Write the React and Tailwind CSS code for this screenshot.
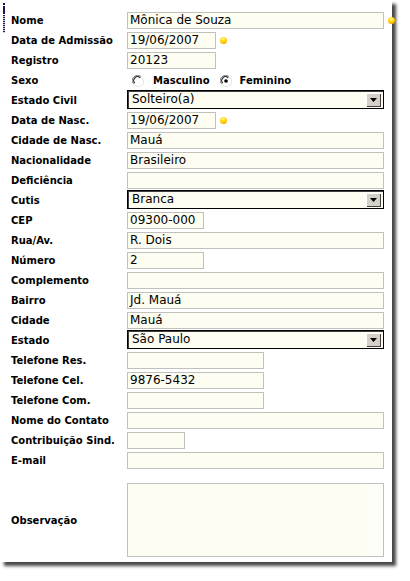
import React from "react";

const labelFont = { fontFamily: '"DejaVu Sans", Verdana, sans-serif' };

function Dot() {
  return (
    <span className="ml-[4px] mt-[5px] inline-block h-[7px] w-[7px] shrink-0 rounded-full bg-[radial-gradient(circle_at_45%_30%,#fff7a0,#ffd400_45%,#f5a300_85%)]" />
  );
}

function Field({ w, value = "" }) {
  return (
    <div
      className={`${w} h-[17px] shrink-0 border border-[#c0c0bc] bg-[#fdfdf1] pl-[2px] text-[12px] leading-[15px] text-black whitespace-nowrap overflow-hidden`}
    >
      {value}
    </div>
  );
}

function Select({ value }) {
  return (
    <div className="-mt-[2px] flex h-[19px] w-[257px] shrink-0 items-center border border-black bg-[#fdfdf1] shadow-[inset_1px_1px_0_#404040] pl-[4px] pr-[2px] text-[12px] leading-[15px]">
      <span className="flex-1">{value}</span>
      <span className="flex h-[14px] w-[15px] items-center justify-center bg-[#d4d0c8] shadow-[inset_1px_1px_0_#ffffff,inset_-1px_-1px_0_#404040]">
        <svg width="7" height="4" viewBox="0 0 7 4">
          <path d="M0 0h7L3.5 4z" fill="#000" />
        </svg>
      </span>
    </div>
  );
}

function Radio({ checked }) {
  return (
    <svg width="12" height="12" viewBox="0 0 12 12" className="shrink-0">
      <circle cx="6" cy="6" r="5" fill="#fff" />
      <path d="M1.8 9.2A5 5 0 0 1 9.2 1.8" stroke="#808080" strokeWidth="1" fill="none" />
      <path d="M2.8 8.2A3.6 3.6 0 0 1 8.2 2.8" stroke="#202020" strokeWidth="1.2" fill="none" />
      <path d="M10.2 2.8A5 5 0 0 1 2.8 10.2" stroke="#e0e0e0" strokeWidth="1" fill="none" />
      {checked && <circle cx="6" cy="6" r="1.8" fill="#000" />}
    </svg>
  );
}

function Row({ label, children }) {
  return (
    <div className="flex h-[20px] shrink-0 items-start">
      <div
        className="flex h-[17px] w-[127px] shrink-0 items-center pl-[11px] text-[10px] font-bold text-black"
        style={labelFont}
      >
        {label}
      </div>
      {children}
    </div>
  );
}

const W = "w-[257px]";

export default function App() {
  return (
    <div className="min-h-[581px] bg-white" style={labelFont}>
      <div className="relative h-[562px] w-[392px] bg-white shadow-[4px_4px_3px_rgba(40,40,40,0.85)]">
        <svg className="absolute left-[2px] top-[2px]" width="4" height="32" viewBox="0 0 4 32">
          <rect x="1" y="1" width="2" height="2" fill="#14145a" />
          <rect x="1" y="4" width="2" height="8" fill="#14145a" />
          {[13, 15, 17, 19, 21, 23, 25, 27, 29].map((y) => (
            <rect key={y} x="1" y={y} width="2" height="1.2" fill="#14145a" />
          ))}
        </svg>

        <div className="flex flex-col pt-[12px]">
          <Row label="Nome">
            <Field w={W} value="Mônica de Souza" />
            <Dot />
          </Row>
          <Row label="Data de Admissão">
            <Field w="w-[89px]" value="19/06/2007" />
            <Dot />
          </Row>
          <Row label="Registro">
            <Field w="w-[89px]" value="20123" />
          </Row>
          <Row label="Sexo">
            <div className="flex h-[17px] items-center text-[10px] font-bold">
              <span className="ml-[5px] flex">
                <Radio />
              </span>
              <span className="ml-[9px]">Masculino</span>
              <span className="ml-[10px] flex">
                <Radio checked />
              </span>
              <span className="ml-[8px]">Feminino</span>
            </div>
          </Row>
          <Row label="Estado Civil">
            <Select value="Solteiro(a)" />
          </Row>
          <Row label="Data de Nasc.">
            <Field w="w-[89px]" value="19/06/2007" />
            <Dot />
          </Row>
          <Row label="Cidade de Nasc.">
            <Field w={W} value="Mauá" />
          </Row>
          <Row label="Nacionalidade">
            <Field w={W} value="Brasileiro" />
          </Row>
          <Row label="Deficiência">
            <Field w={W} />
          </Row>
          <Row label="Cutis">
            <Select value="Branca" />
          </Row>
          <Row label="CEP">
            <Field w="w-[77px]" value="09300-000" />
          </Row>
          <Row label="Rua/Av.">
            <Field w={W} value="R. Dois" />
          </Row>
          <Row label="Número">
            <Field w="w-[77px]" value="2" />
          </Row>
          <Row label="Complemento">
            <Field w={W} />
          </Row>
          <Row label="Bairro">
            <Field w={W} value="Jd. Mauá" />
          </Row>
          <Row label="Cidade">
            <Field w={W} value="Mauá" />
          </Row>
          <Row label="Estado">
            <Select value="São Paulo" />
          </Row>
          <Row label="Telefone Res.">
            <Field w="w-[137px]" />
          </Row>
          <Row label="Telefone Cel.">
            <Field w="w-[137px]" value="9876-5432" />
          </Row>
          <Row label="Telefone Com.">
            <Field w="w-[137px]" />
          </Row>
          <Row label="Nome do Contato">
            <Field w={W} />
          </Row>
          <Row label="Contribuição Sind.">
            <Field w="w-[58px]" />
          </Row>
          <Row label="E-mail">
            <Field w={W} />
          </Row>

          <div className="mt-[11px] flex items-center">
            <div className="w-[127px] shrink-0 pl-[11px] text-[10px] font-bold">Observação</div>
            <div className="flex h-[74px] w-[257px] shrink-0 border border-[#c0c0bc] bg-[#fdfdf1]">
              <div className="flex-1" />
              <div className="w-[16px] bg-[#fefef9]" />
            </div>
          </div>
        </div>
      </div>
    </div>
  );
}
